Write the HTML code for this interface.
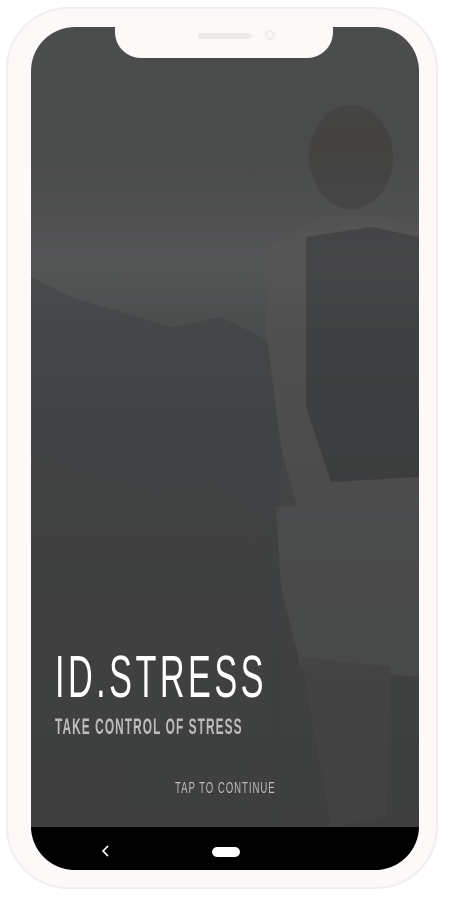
<!DOCTYPE html>
<html><head><meta charset="utf-8"><style>
html,body{margin:0;padding:0;width:450px;height:898px;background:#fff;overflow:hidden;font-family:"Liberation Sans",sans-serif}
.frame{position:absolute;left:6px;top:7px;width:432px;height:882px;border-radius:62px;background:#fcf9f8;border:2px solid #f0eeee;box-sizing:border-box}
.screen{position:absolute;left:31px;top:27px;width:388px;height:843px;border-radius:44px;overflow:hidden;background:linear-gradient(#4b4c4c 0%,#4a4b4b 15%,#4f5051 22%,#555657 28%,#4a4c4d 36%,#444647 50%,#404141 70%,#3d3e3e 100%)}
.notch{position:absolute;left:115px;top:20px;width:218px;height:38px;background:#fcf9f8;border-radius:0 0 26px 26px}
.spk{position:absolute;left:198px;top:33px;width:54px;height:6px;border-radius:3px;background:#eeeceb}
.cam{position:absolute;left:265px;top:30px;width:10px;height:10px;border-radius:50%;border:2px solid #eeeceb;box-sizing:border-box}
.nav{position:absolute;left:0;top:800px;width:388px;height:43px;background:#000}
.t{position:absolute;white-space:nowrap;transform-origin:0 0}
</style></head><body>
<div class="frame"></div>
<div class="screen">
 <svg width="388" height="843" style="position:absolute;left:0;top:0">
  <g opacity=".45">
  <path d="M0 250 L40 270 L90 285 L140 300 L190 290 L230 310 L250 330 L250 843 L0 843Z" fill="#3d4142"/>
  <path d="M0 430 L60 450 L120 470 L180 460 L240 500 L240 843 L0 843Z" fill="#404040"/>
  <ellipse cx="320" cy="130" rx="42" ry="52" fill="#3e3b39"/>
  <path d="M240 220 L290 190 L350 190 L388 200 L388 480 L370 500 L270 495 L250 420 L235 300Z" fill="#5a5657"/>
  <path d="M275 210 L340 200 L388 210 L388 450 L300 455 L275 380Z" fill="#343536"/>
  <path d="M245 480 L388 470 L388 650 L270 640 L250 560Z" fill="#555555"/>
  <path d="M270 630 L360 640 L355 790 L300 800 Z" fill="#4a4848"/>
  </g>
 </svg>
 <div class="t" style="left:24px;top:616px;font-size:59px;color:#fff;letter-spacing:6px;transform:scaleX(.58)">ID.STRESS</div>
 <div class="t" style="left:24px;top:687px;font-size:22px;font-weight:bold;color:#bdbdbd;letter-spacing:2px;transform:scaleX(.54)">TAKE CONTROL OF STRESS</div>
 <div class="t" style="left:144px;top:753px;font-size:16px;color:#bdbdbd;letter-spacing:1.6px;transform:scaleX(.6)">TAP TO CONTINUE</div>
 <div class="nav">
  <svg width="388" height="43" style="position:absolute;left:0;top:0"><path d="M77 19 L72 24 L77 29" stroke="#fff" stroke-width="1.6" fill="none"/><rect x="181" y="20" width="28" height="10" rx="5" fill="#fff"/></svg>
 </div>
</div>
<div class="notch"></div>
<div class="spk"></div>
<div class="cam"></div>
</body></html>
